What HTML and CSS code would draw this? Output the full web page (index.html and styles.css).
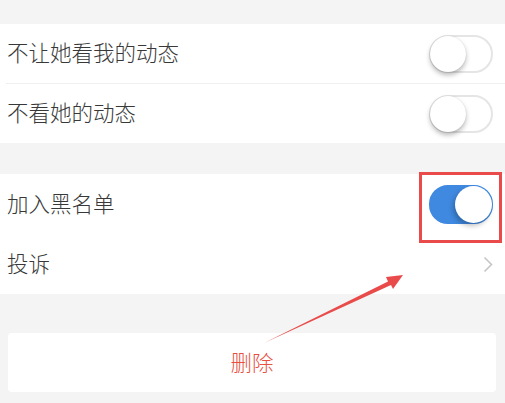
FILE: index.html
```html
<!DOCTYPE html>
<html lang="zh">
<head>
<meta charset="utf-8">
<link rel="stylesheet" href="styles.css">
</head>
<body>
<div class="page">
  <section class="group group-first">
    <div class="row row-divided">
      <span class="label">不让她看我的动态</span>
      <span class="toggle"><span class="knob"></span></span>
    </div>
    <div class="row">
      <span class="label">不看她的动态</span>
      <span class="toggle"><span class="knob"></span></span>
    </div>
  </section>
  <section class="group group-second">
    <div class="row">
      <span class="label">加入黑名单</span>
      <span class="toggle toggle-on"><span class="knob"></span></span>
    </div>
    <div class="row">
      <span class="label">投诉</span>
      <svg class="chevron" width="10" height="17" viewBox="0 0 10 17"><path d="M1.5 1.5 L8.5 8.5 L1.5 15.5" fill="none" stroke="#c6c6c6" stroke-width="1.6"/></svg>
    </div>
  </section>
  <div class="delete-card"><span class="delete-text">删除</span></div>
  <div class="highlight-box"></div>
  <svg class="arrow" width="505" height="403" viewBox="0 0 505 403">
    <polygon points="264,343 388,281.5 386,277 403,275 393,289 391,285" fill="#e94b4b"/>
  </svg>
</div>
</body>
</html>
```
FILE: styles.css
```css
html, body {
  margin: 0;
  padding: 0;
}
body {
  background: #f4f4f4;
  font-family: "Noto Sans CJK SC", "Noto Sans", sans-serif;
  width: 505px;
  height: 403px;
  overflow: hidden;
}
.page {
  position: relative;
  padding-top: 24px;
}
.group {
  background: #ffffff;
}
.group-second {
  margin-top: 31px;
}
.row {
  height: 59px;
  display: flex;
  align-items: center;
  justify-content: space-between;
  padding: 0 12px 0 7px;
}
.group-second .row {
  height: 60px;
}
.row-divided {
  position: relative;
}
.row-divided::after {
  content: "";
  position: absolute;
  left: 6px;
  right: 0;
  bottom: -1px;
  height: 1px;
  background: #efefef;
}
.row-divided + .row {
  margin-top: 1px;
}
.label {
  font-size: 21.5px;
  font-weight: 300;
  color: #383838;
  line-height: 1;
  margin-bottom: 3px;
}
.toggle {
  box-sizing: border-box;
  width: 64px;
  height: 38px;
  border-radius: 19px;
  border: 2px solid #e5e5e5;
  background: #ffffff;
  position: relative;
  display: block;
}
.toggle .knob {
  position: absolute;
  top: -1px;
  left: -1px;
  width: 36px;
  height: 36px;
  border-radius: 50%;
  background: #ffffff;
  box-shadow: 0 3px 5px rgba(0, 0, 0, 0.28), 0 0 1px rgba(0, 0, 0, 0.15);
}
.toggle-on {
  border-color: #3f89e0;
  background: #3f89e0;
  height: 39px;
}
.toggle-on .knob {
  left: auto;
  right: -1px;
  top: -1px;
  width: 37px;
  height: 37px;
  box-shadow: -2px 3px 5px rgba(0, 0, 0, 0.25);
}
.chevron {
  display: block;
}
.delete-card {
  margin: 39px 9px 0 8px;
  height: 59px;
  background: #ffffff;
  border-radius: 4px;
  display: flex;
  align-items: center;
  justify-content: center;
}
.delete-text {
  font-size: 21.5px;
  font-weight: 300;
  line-height: 1;
  color: #e8503f;
  margin-bottom: 1px;
}
.highlight-box {
  position: absolute;
  left: 419px;
  top: 172px;
  width: 83px;
  height: 71px;
  box-sizing: border-box;
  border: 3px solid #e94b4b;
}
.arrow {
  position: absolute;
  left: 0;
  top: 0;
  pointer-events: none;
}
```
